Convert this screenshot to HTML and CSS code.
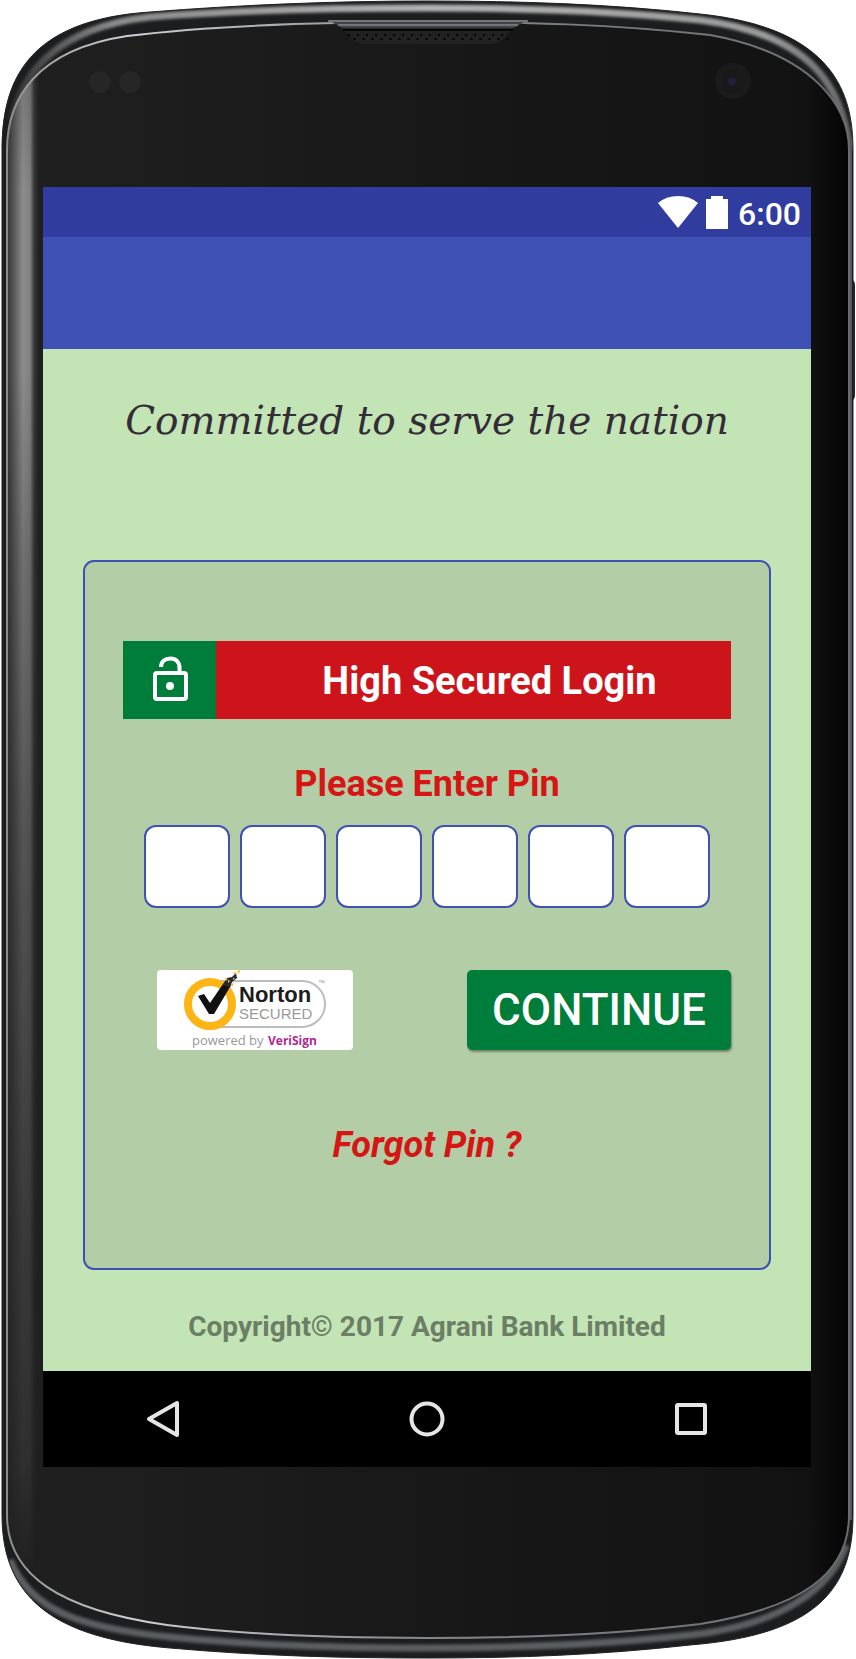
FILE: index.html
```html
<!DOCTYPE html>
<html lang="en">
<head>
<meta charset="utf-8">
<meta name="viewport" content="width=device-width, initial-scale=1">
<title>Agrani Bank – Login</title>
<link rel="stylesheet" href="styles.css">
</head>
<body>
<div class="phone">
  <svg class="phone-shell" viewBox="0 0 856 1659" preserveAspectRatio="none" aria-hidden="true">
    <defs>
      <linearGradient id="face" x1="0" y1="0" x2="1" y2="0">
        <stop offset="0" stop-color="#202020"/>
        <stop offset="0.5" stop-color="#181818"/>
        <stop offset="0.95" stop-color="#121212"/>
        <stop offset="1" stop-color="#040404"/>
      </linearGradient>
      <linearGradient id="sheen" x1="0" y1="0" x2="1" y2="0">
        <stop offset="0" stop-color="#999" stop-opacity="0.15"/>
        <stop offset="0.3" stop-color="#999" stop-opacity="0.6"/>
        <stop offset="0.5" stop-color="#999" stop-opacity="0.9"/>
        <stop offset="0.72" stop-color="#999" stop-opacity="0.8"/>
        <stop offset="0.85" stop-color="#999" stop-opacity="0.2"/>
        <stop offset="1" stop-color="#999" stop-opacity="0"/>
      </linearGradient>
      <linearGradient id="fade" x1="0" y1="0" x2="0" y2="1">
        <stop offset="0" stop-color="#fff" stop-opacity="0.8"/>
        <stop offset="0.08" stop-color="#fff"/>
        <stop offset="0.2" stop-color="#fff"/>
        <stop offset="0.32" stop-color="#fff" stop-opacity="0.75"/>
        <stop offset="0.5" stop-color="#fff" stop-opacity="0.5"/>
        <stop offset="0.77" stop-color="#fff" stop-opacity="0.25"/>
        <stop offset="0.92" stop-color="#fff" stop-opacity="0.15"/>
        <stop offset="1" stop-color="#fff" stop-opacity="0"/>
      </linearGradient>
      <linearGradient id="band" x1="0" y1="0" x2="1" y2="0">
        <stop offset="0" stop-color="#333"/>
        <stop offset="0.12" stop-color="#8a8a8a"/>
        <stop offset="0.5" stop-color="#b4b4b4"/>
        <stop offset="0.9" stop-color="#9a9a9a"/>
        <stop offset="1" stop-color="#666"/>
      </linearGradient>
      <linearGradient id="edge" x1="0" y1="0" x2="1" y2="0">
        <stop offset="0" stop-color="#8d8d88"/>
        <stop offset="0.15" stop-color="#d0d0d4"/>
        <stop offset="0.5" stop-color="#85868a"/>
        <stop offset="1" stop-color="#6a6b6e"/>
      </linearGradient>
      <filter id="soft" x="-5%" y="-20%" width="110%" height="140%"><feGaussianBlur stdDeviation="1.5"/></filter>
      <mask id="sheenMask"><rect x="0" y="70" width="60" height="1510" fill="url(#fade)"/></mask>
      <pattern id="holes" width="9" height="8" patternUnits="userSpaceOnUse" x="344" y="33">
        <circle cx="5" cy="2" r="1.3" fill="#060606"/>
        <circle cx="1.500" cy="6" r="1.300" fill="#060606"/>
      </pattern>
      <path id="glass" d="M7 150C7 100 35 50 127 36C225 24 330 22 428 22C525 22 610 24 710 35C815 54 849 108 849 150V1515C849 1575 800 1608 700 1624C610 1635 520 1638 428 1638C335 1638 245 1635 167 1625C60 1610 7 1575 7 1515Z"/>
      <path id="body" d="M2 150C2 80 28 20 150 12C240 5 330 1 428 1C520 1 610 4 700 14C835 28 853 95 853 150V1515C853 1590 815 1635 690 1645C600 1655 520 1658 428 1658C340 1658 260 1656 170 1648C50 1638 2 1595 2 1515Z"/>
      <clipPath id="glassClip"><use href="#glass"/></clipPath>
      <clipPath id="bodyClip"><use href="#body"/></clipPath>
    </defs>
    <path d="M852 280q3 0 3 6v108q0 6-3 6z" fill="#222"/>
    <use href="#body" fill="#1c1d1f"/>
    <g clip-path="url(#bodyClip)" fill="none">
      <path d="M12 120C20 80 50 28 150 17C240 10 330 8 428 8C520 8 610 10 700 20C810 34 842 85 850 150" stroke="url(#band)" stroke-width="7" filter="url(#soft)"/>
      <path d="M10 1560C30 1610 80 1628 170 1637C260 1646 340 1648 428 1648C520 1648 600 1645 690 1635C780 1625 830 1590 846 1545" stroke="#5c5f61" stroke-width="7" filter="url(#soft)"/>
      <path d="M851 140V1520" stroke="#55565a" stroke-width="2"/>
    </g>
    <use href="#body" fill="none" stroke="#222" stroke-width="1"/>
    <use href="#glass" fill="url(#face)"/>
    <g clip-path="url(#glassClip)">
      <rect x="7" y="70" width="32" height="1510" fill="url(#sheen)" mask="url(#sheenMask)"/>
    </g>
    <use href="#glass" fill="none" stroke="url(#edge)" stroke-width="2"/>
    <path d="M330 21H526Q520 22 515 26L505 37Q499 44 491 44H364Q356 44 350 37L341 27Q337 22 330 21Z" fill="#222"/>
    <path d="M328 20H528L514 28H342Z" fill="#404245"/>
    <path d="M328 21H528M338 25H518" stroke="#85878b" stroke-width="1.500"/>
    <path d="M343 30H513" stroke="#080808" stroke-width="2"/>
    <rect x="346" y="33" width="163" height="8" fill="url(#holes)"/>
    <circle cx="100" cy="82" r="11" fill="#262626"/>
    <circle cx="130" cy="82" r="11" fill="#262626"/>
    <circle cx="733" cy="81" r="18" fill="#1b1b1c"/>
    <circle cx="733" cy="81" r="12" fill="#19191b"/>
    <circle cx="732" cy="81" r="4" fill="#20203c"/>
  </svg>

  <div class="screen">
    <header class="top">
      <div class="status">
        <svg class="wifi" viewBox="0 0 40 32" aria-label="Wi-Fi"><path d="M20 32L0 7Q8 0 20 0T40 7Z" fill="#fff"/></svg>
        <svg class="battery" viewBox="0 0 22 33" aria-label="Battery"><path d="M5 0H17V3H22V33H0V3H5Z" fill="#fff"/></svg>
        <time class="clock">6:00</time>
      </div>
      <div class="appbar"></div>
    </header>

    <main class="content">
      <p class="slogan">Committed to serve the nation</p>
      <form class="card">
        <div class="banner">
          <div class="banner-icon">
            <svg class="lock" viewBox="0 0 36 46" fill="none" stroke="#fff" stroke-width="4">
              <rect x="3" y="17" width="31" height="26" rx="2"/>
              <path d="M9 11C9 5.500 13 2.500 18.500 2.500C24 2.500 27.500 6.500 27.500 12V17"/>
              <circle cx="18" cy="30" r="4" fill="#fff" stroke="none"/>
            </svg>
          </div>
          <h1 class="banner-title">High Secured Login</h1>
        </div>
        <h2 class="prompt" id="pin-label">Please Enter Pin</h2>
        <div class="pins" role="group" aria-labelledby="pin-label">
          <input class="pin" type="password" maxlength="1" aria-label="Pin digit 1">
          <input class="pin" type="password" maxlength="1" aria-label="Pin digit 2">
          <input class="pin" type="password" maxlength="1" aria-label="Pin digit 3">
          <input class="pin" type="password" maxlength="1" aria-label="Pin digit 4">
          <input class="pin" type="password" maxlength="1" aria-label="Pin digit 5">
          <input class="pin" type="password" maxlength="1" aria-label="Pin digit 6">
        </div>
        <div class="actions">
          <svg class="norton" viewBox="0 0 196 80" role="img" aria-label="Norton Secured, powered by VeriSign">
            <rect width="196" height="80" rx="4" fill="#fff"/>
            <path d="M60 11H145A23 23 0 0 1 145 57H60" fill="none" stroke="#bdbdbd" stroke-width="2"/>
            <circle cx="53" cy="34" r="22" fill="#fff" stroke="#fdb515" stroke-width="8"/>
            <path d="M41 26L47 24L53 33L66 14L73 17L57 44H52Z" fill="#111"/>
            <path d="M66 14L70 8L75 7L79 3L80 8L75 12L73 18Z" fill="#2a2a2a"/>
            <path d="M68 8l3 1-2 2zM74 14l3-1-2 4zM76 3l3-1-1 3zM80 1l3-1-1 4z" fill="#fdb515"/>
            <path d="M71 10l2 1-2 2zM76 8l2 0-2 2z" fill="#ccc"/>
            <text class="n-name" x="82" y="32">Norton</text>
            <text class="n-secured" x="82" y="49">SECURED</text>
            <text class="n-tm" x="161" y="15">™</text>
            <text class="n-by" x="35" y="75">powered by</text>
            <text class="n-sign" x="111" y="75">VeriSign</text>
          </svg>
          <button class="continue" type="button">CONTINUE</button>
        </div>
        <a class="forgot" href="#forgot">Forgot Pin ?</a>
      </form>
      <p class="copyright">Copyright© 2017 Agrani Bank Limited</p>
    </main>

    <nav class="navbar" aria-label="System">
      <button class="nav-btn" type="button" aria-label="Back"><svg class="nav-icon" viewBox="0 0 40 40"><path d="M34 4V36L6 20Z"/></svg></button>
      <button class="nav-btn" type="button" aria-label="Home"><svg class="nav-icon" viewBox="0 0 40 40"><circle cx="20" cy="20" r="15.500"/></svg></button>
      <button class="nav-btn" type="button" aria-label="Recent apps"><svg class="nav-icon" viewBox="0 0 40 40"><rect x="6" y="6" width="28" height="28" rx="1"/></svg></button>
    </nav>
  </div>
</div>
</body>
</html>
```
FILE: styles.css
```css
* { box-sizing: border-box; }

body {
  margin: 0;
  background: #fff;
  font-family: Roboto, "Liberation Sans", sans-serif;
}

h1, h2, p { margin: 0; }

button { border: 0; padding: 0; font-family: inherit; cursor: pointer; }

.phone {
  position: relative;
  display: flex;
  min-height: 100vh;
  padding: 187px 45px 192px 43px;
}

/* Device shell sits behind the screen */
.phone-shell {
  position: absolute;
  inset: 0;
  width: 100%;
  height: 100%;
}

.screen {
  position: relative;
  flex: 1;
  display: flex;
  flex-direction: column;
  background: #c3e4b4;
}

.status {
  display: flex;
  align-items: center;
  justify-content: flex-end;
  gap: 8px;
  height: 50px;
  padding-right: 10px;
  background: #303d9f;
}

.wifi { width: 40px; height: 32px; }

.battery { width: 22px; height: 33px; }

.clock {
  margin-left: 2px;
  padding-top: 3px;
  color: #fff;
  font-size: 32px;
  font-weight: 500;
  line-height: 48px;
}

.appbar { height: 112px; background: #3f51b5; }

.content {
  flex: 1;
  display: flex;
  flex-direction: column;
  padding: 48px 32px 0 40px;
  padding-right: 40px;
}

.slogan {
  margin-bottom: 115px;
  color: #342c36;
  font-family: "DejaVu Serif", serif;
  font-size: 39px;
  font-style: italic;
  line-height: 48px;
  text-align: center;
}

.card {
  display: flex;
  flex-direction: column;
  align-items: center;
  min-height: 710px;
  padding: 79px 38px 0;
  border: 2px solid #3f51b5;
  border-radius: 11px;
  background: #b3cda6;
}

.banner { display: flex; align-self: stretch; height: 78px; }

.banner-icon {
  display: flex;
  align-items: center;
  justify-content: center;
  width: 93px;
  padding-bottom: 3px;
  background: #007d3a;
}

.lock { width: 36px; height: 46px; }

.banner-title {
  flex: 1;
  padding: 1px 0 0 32px;
  background: #ce141b;
  color: #fff;
  font-size: 38px;
  font-weight: 700;
  line-height: 78px;
  text-align: center;
}

.prompt {
  margin-top: 41px;
  color: #d51614;
  font-size: 36px;
  font-weight: 700;
  line-height: 48px;
}

.pins { display: flex; gap: 10px; margin-top: 17px; }

.pin {
  width: 86px;
  height: 83px;
  border: 2px solid #3f51b5;
  border-radius: 12px;
  background: #fff;
  font-size: 36px;
  text-align: center;
}

.actions {
  display: flex;
  align-self: stretch;
  justify-content: space-between;
  margin-top: 62px;
  padding-left: 34px;
}

.norton { width: 196px; height: 80px; }

.n-name { font: 700 22px "Liberation Sans", sans-serif; fill: #1c1c1c; }
.n-secured { font: 400 15px "Liberation Sans", sans-serif; fill: #999; }
.n-tm { font: 400 7px "Liberation Sans", sans-serif; fill: #999; }
.n-by { font: 400 13px "Open Sans", sans-serif; fill: #999; }
.n-sign { font: 700 12px "Open Sans", sans-serif; fill: #b0278f; }

.continue {
  width: 264px;
  height: 80px;
  border-radius: 5px;
  background: #007d3a;
  box-shadow: 1px 2px 2px rgba(0, 0, 0, 0.35);
  color: #fff;
  font-size: 44px;
  font-weight: 500;
}

.forgot {
  margin-top: 71px;
  color: #d51614;
  font-size: 36px;
  font-style: italic;
  font-weight: 700;
  line-height: 48px;
  text-decoration: none;
}

.copyright {
  margin-top: 41px;
  color: #6c7e66;
  font-size: 28px;
  font-weight: 700;
  line-height: 32px;
  text-align: center;
}

.navbar {
  display: flex;
  justify-content: space-between;
  height: 96px;
  padding: 0 72px;
  background: #000;
}

.nav-btn {
  display: flex;
  align-items: center;
  justify-content: center;
  width: 96px;
  background: transparent;
}

.nav-icon {
  width: 40px;
  height: 40px;
  fill: none;
  stroke: #e6e6e6;
  stroke-width: 4;
  stroke-linejoin: round;
}
```
